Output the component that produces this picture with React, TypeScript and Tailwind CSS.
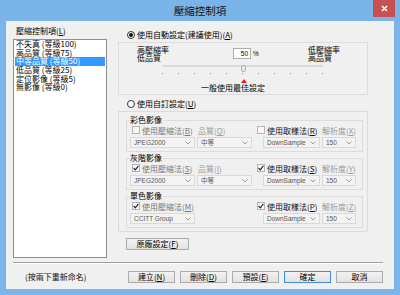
import React from "react";

// mnemonic key like (A) with underlined letter
function K({ c }: { c: string }) {
  return (
    <>
      (<span className="underline underline-offset-[1px] decoration-[0.5px]">{c}</span>)
    </>
  );
}

function Chevron() {
  return (
    <svg width="6" height="4" viewBox="0 0 6 4" className="shrink-0">
      <path d="M0.5 0.5 L3 3 L5.5 0.5" fill="none" stroke="#9c9c9c" strokeWidth="1" />
    </svg>
  );
}

function Combo({ text, className }: { text: string; className: string }) {
  return (
    <div
      className={`h-[11px] border border-[#d9d9d9] bg-[#f3f3f3] flex items-center pl-[3px] pr-[3px] font-['Liberation_Sans','Noto_Sans_CJK_TC',sans-serif] text-[6.5px] leading-[9px] text-[#555] ${className}`}
    >
      <span className="flex-1 overflow-hidden whitespace-nowrap">{text}</span>
      <Chevron />
    </div>
  );
}

function Check({
  checked,
  dim,
  children,
}: {
  checked?: boolean;
  dim?: boolean;
  children: React.ReactNode;
}) {
  return (
    <div className="flex items-center gap-[2px] h-[8px]">
      <span className="w-[8px] h-[8px] border border-[#b4b4b4] bg-[#f7f7f7] flex items-center justify-center shrink-0">
        {checked && (
          <svg width="6" height="6" viewBox="0 0 6 6">
            <path d="M0.6 3 L2.3 4.8 L5.4 0.8" fill="none" stroke="#202020" strokeWidth="1.1" />
          </svg>
        )}
      </span>
      <span className={dim ? "text-[#7a7a7a]" : "text-[#111]"}>{children}</span>
    </div>
  );
}

function Radio({ on, children }: { on?: boolean; children: React.ReactNode }) {
  return (
    <div className="flex items-center gap-[2px] h-[9px] ml-[9px]">
      <span className="w-[8px] h-[8px] rounded-full border border-[#333] bg-white flex items-center justify-center shrink-0">
        {on && <span className="w-[4px] h-[4px] rounded-full bg-[#111]" />}
      </span>
      <span>{children}</span>
    </div>
  );
}

function Group({ title, children }: { title: string; children: React.ReactNode }) {
  return (
    <fieldset className="min-w-0 border border-[#dcdcdc] pl-[3px] pr-[2px] pb-[3px]">
      <legend className="-ml-[1px] px-[1px] h-[8px] leading-[8px] text-black">{title}</legend>
      {children}
    </fieldset>
  );
}

function Btn({
  children,
  primary,
  className,
}: {
  children: React.ReactNode;
  primary?: boolean;
  className: string;
}) {
  return (
    <button
      className={`h-[12px] flex items-center justify-center border ${
        primary ? "border-[#3d8ee0]" : "border-[#acacac]"
      } bg-gradient-to-b from-[#f2f2f2] to-[#e2e2e2] text-[8px] leading-[8px] text-black ${className}`}
    >
      {children}
    </button>
  );
}

const presets = [
  "不失真 (等級100)",
  "高品質 (等級75)",
  "中等品質 (等級50)",
  "低品質 (等級25)",
  "定位影像 (等級5)",
  "無影像 (等級0)",
];

export default function App() {
  return (
    <div className="w-[400px] h-[295px] bg-[#7ab4e8] flex flex-col font-['Noto_Sans_CJK_TC',sans-serif] text-[8px] leading-[9px] text-black overflow-hidden">
      {/* Title bar */}
      <div className="h-[21px] flex shrink-0">
        <div className="w-[27px]" />
        <div className="flex-1 text-center text-[10.5px] leading-[12px] pt-[5px] text-[#111]">壓縮控制項</div>
        <div className="w-[22px] h-[17px] mr-[5px] bg-[#c75050] flex items-center justify-center">
          <svg width="7" height="7" viewBox="0 0 7 7">
            <path d="M1 1 L6 6 M6 1 L1 6" stroke="#fff" strokeWidth="1.6" />
          </svg>
        </div>
      </div>

      {/* Client area */}
      <div className="mx-[6px] mb-[6px] flex-1 bg-[#f0f0f0] flex flex-col">
        <div className="h-[241px] flex">
          {/* Preset list */}
          <div className="ml-[7px] w-[94px] pt-[6px]">
            <div className="pl-[3px] leading-[8px]">
              壓縮控制項<K c="L" />
            </div>
            <div className="mt-[4px] h-[219px] border border-[#8e8f94] bg-white px-[1px]">
              {presets.map((p, i) => (
                <div
                  key={p}
                  className={`h-[8.66px] leading-[8.66px] pl-[1px] whitespace-nowrap ${
                    i === 2 ? "bg-[#3399ff] text-white" : ""
                  }`}
                >
                  {p}
                </div>
              ))}
            </div>
          </div>

          {/* Settings */}
          <div className="ml-[11px] w-[250px] pt-[9px]">
            <Radio on>
              使用自動設定(建議使用)<K c="A" />
            </Radio>

            <div className="mt-[3px] h-[53px] border border-[#dcdcdc] pt-[3px]">
              <div className="flex h-[16px]">
                <div className="ml-[18px] w-[96px] leading-[8px]">
                  高壓縮率
                  <br />
                  低品質
                </div>
                <div className="mt-[2px] w-[18px] h-[11px] border border-[#acacac] bg-white text-right pr-[2px] font-['Liberation_Sans',sans-serif] text-[6.5px] leading-[9px]">
                  50
                </div>
                <div className="ml-[2px] w-[55px] mt-[2px] font-['Liberation_Sans',sans-serif] text-[6.5px] leading-[11px]">%</div>
                <div className="leading-[8px]">
                  低壓縮率
                  <br />
                  高品質
                </div>
              </div>
              <div className="relative ml-[43px] w-[161px] h-[7px] mt-[1px]">
                <div className="mt-[3px] h-[2px] bg-[#d8d8d8]" />
                <div className="absolute left-[79px] top-0 w-[5px] h-[7px] rounded-[2px] border border-[#b0b0b0] bg-[#e8e8e8]" />
              </div>
              <div className="ml-[43px] w-[161px] mt-[1px] flex justify-between">
                {Array.from({ length: 11 }).map((_, i) => (
                  <span key={i} className="w-[1px] h-[1px] bg-[#8a8a8a]" />
                ))}
              </div>
              <div className="mt-[5px] ml-[122px] w-0 h-0 border-l-[3px] border-r-[3px] border-b-[4px] border-l-transparent border-r-transparent border-b-[#e52020]" />
              <div className="mt-[1px] ml-[82px] leading-[8px]">一般使用最佳設定</div>
            </div>

            <div className="mt-[4px]">
              <Radio>
                使用自訂設定<K c="U" />
              </Radio>
            </div>

            <div className="mt-[3px] border border-[#dcdcdc] pt-[4px] pl-[7px] pr-[4px] pb-[3px] flex flex-col gap-[2px]">
              <Group title="彩色影像">
                <div className="mt-[2px] flex h-[8px]">
                  <div className="w-[67px] pl-[2px]">
                    <Check dim>
                      使用壓縮法<K c="B" />
                    </Check>
                  </div>
                  <div className="w-[60px] pl-[1px] text-[#9a9a9a]">
                    品質<K c="Q" />
                  </div>
                  <div className="w-[65px]">
                    <Check>
                      使用取樣法<K c="R" />
                    </Check>
                  </div>
                  <div className="text-[#9a9a9a]">
                    解析度<K c="X" />
                  </div>
                </div>
                <div className="mt-[3px] flex">
                  <Combo text="JPEG2000" className="w-[65px]" />
                  <Combo text="中等" className="ml-[2px] w-[55px]" />
                  <Combo text="DownSample" className="ml-[11px] w-[57px]" />
                  <Combo text="150" className="ml-[2px] w-[34px]" />
                </div>
              </Group>

              <Group title="灰階影像">
                <div className="mt-[2px] flex h-[8px]">
                  <div className="w-[67px] pl-[2px]">
                    <Check checked dim>
                      使用壓縮法<K c="S" />
                    </Check>
                  </div>
                  <div className="w-[60px] pl-[1px] text-[#9a9a9a]">
                    品質<K c="I" />
                  </div>
                  <div className="w-[65px]">
                    <Check checked>
                      使用取樣法<K c="S" />
                    </Check>
                  </div>
                  <div className="text-[#9a9a9a]">
                    解析度<K c="Y" />
                  </div>
                </div>
                <div className="mt-[3px] flex">
                  <Combo text="JPEG2000" className="w-[65px]" />
                  <Combo text="中等" className="ml-[2px] w-[55px]" />
                  <Combo text="DownSample" className="ml-[11px] w-[57px]" />
                  <Combo text="150" className="ml-[2px] w-[34px]" />
                </div>
              </Group>

              <Group title="單色影像">
                <div className="mt-[2px] flex h-[8px]">
                  <div className="w-[127px] pl-[2px]">
                    <Check checked dim>
                      使用壓縮法<K c="M" />
                    </Check>
                  </div>
                  <div className="w-[65px]">
                    <Check checked>
                      使用取樣法<K c="P" />
                    </Check>
                  </div>
                  <div className="text-[#9a9a9a]">
                    解析度<K c="Z" />
                  </div>
                </div>
                <div className="mt-[3px] flex">
                  <Combo text="CCITT Group" className="w-[65px]" />
                  <Combo text="DownSample" className="ml-[68px] w-[57px]" />
                  <Combo text="150" className="ml-[2px] w-[34px]" />
                </div>
              </Group>
            </div>

            <Btn className="mt-[6px] ml-[8px] w-[63px] h-[11px]">
              原廠設定<K c="F" />
            </Btn>
          </div>
        </div>

        {/* Separator */}
        <div className="ml-[7px] w-[370px] border-t border-[#a0a0a0] border-b border-b-white" />

        {/* Bottom row */}
        <div className="flex-1 flex items-center">
          <div className="ml-[19px] w-[103px] text-[#111]">(按兩下重新命名)</div>
          <div className="flex gap-[5px]">
            <Btn className="w-[47px]">
              建立<K c="N" />
            </Btn>
            <Btn className="w-[47px]">
              刪除<K c="D" />
            </Btn>
            <Btn className="w-[47px]">
              預設<K c="E" />
            </Btn>
            <Btn primary className="w-[47px]">
              確定
            </Btn>
            <Btn className="w-[47px]">取消</Btn>
          </div>
        </div>
      </div>
    </div>
  );
}
